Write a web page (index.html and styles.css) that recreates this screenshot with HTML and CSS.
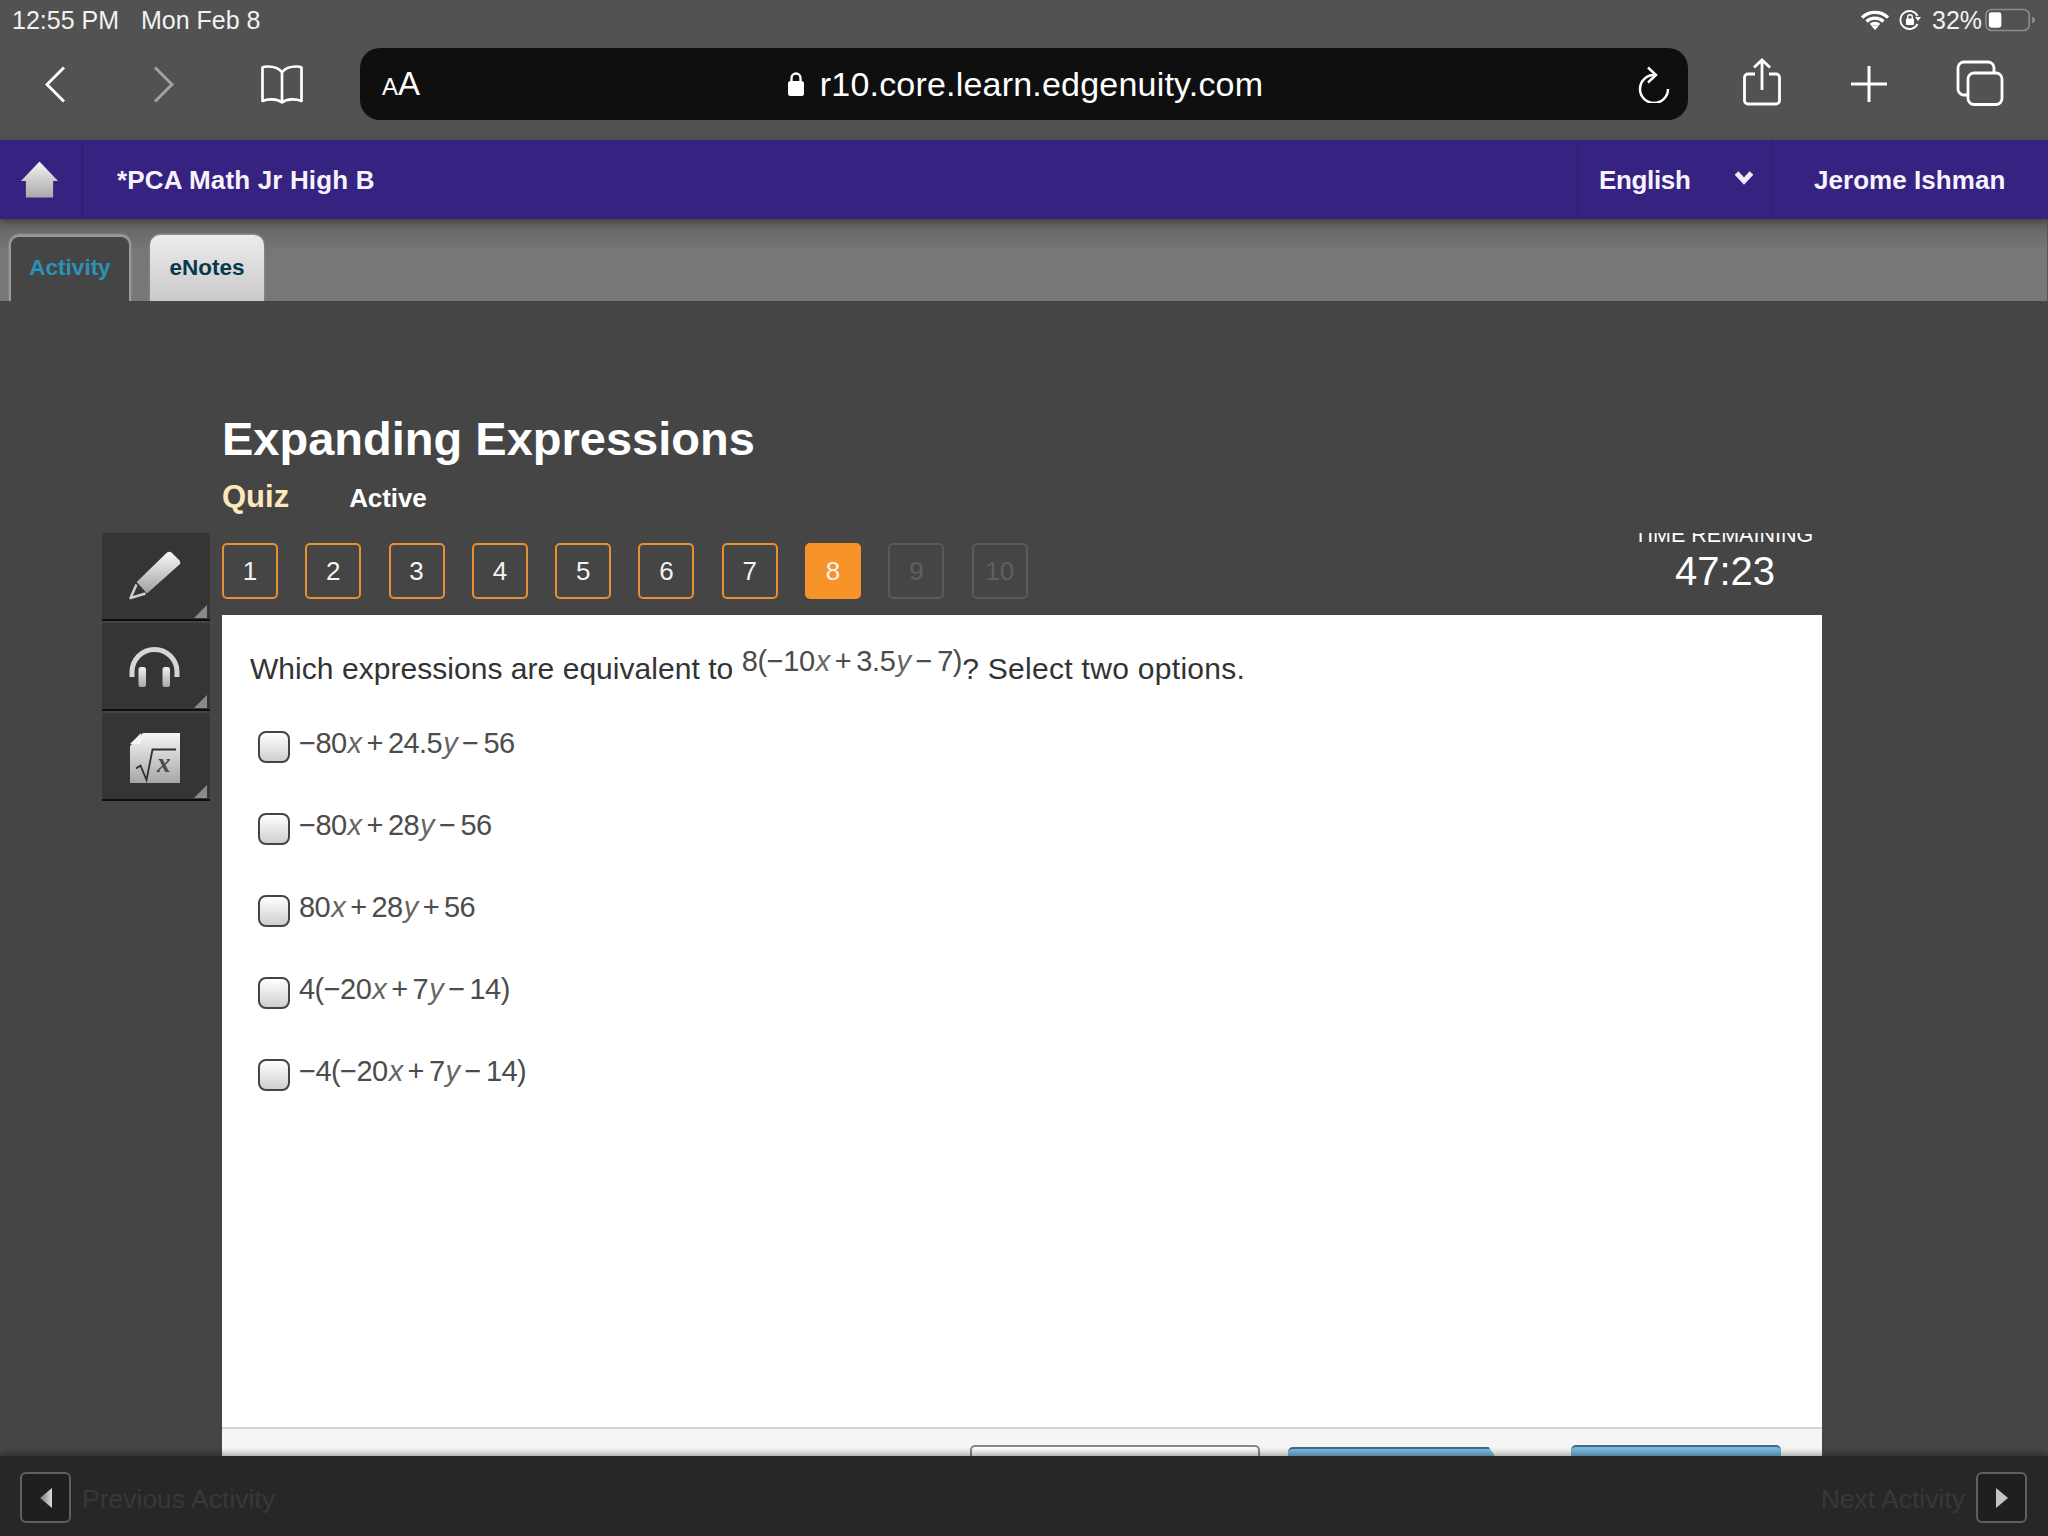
FILE: index.html
```html
<!DOCTYPE html>
<html lang="en">
<head>
<meta charset="utf-8">
<title>Expanding Expressions</title>
<link rel="stylesheet" href="styles.css">
</head>
<body>
<div class="page">
  <div class="chrome">
    <div class="statusbar">
      <div class="status-left"><span>12:55 PM</span><span>Mon Feb 8</span></div>
      <div class="status-right">
        <svg class="ic-wifi" viewBox="0 0 28 20"><path d="M1 7.500a19 19 0 0 1 26 0M5.500 11.500a12.500 12.500 0 0 1 17 0M9.800 15a6.500 6.500 0 0 1 8.400 0" fill="none" stroke="#fff" stroke-width="3.300"/><path d="M14 20l-3.200-3.400a4.500 4.500 0 0 1 6.400 0z" fill="#fff"/></svg>
        <svg class="ic-rot" viewBox="0 0 22 22"><path d="M18.500 15a9 9 0 1 1 0-8" fill="none" stroke="#fff" stroke-width="1.800"/><path d="M16 8h6l-3 4z" fill="#fff"/><rect x="7" y="9.500" width="8" height="6.500" rx="1" fill="#fff"/><path d="M8.700 10V8a2.300 2.300 0 0 1 4.600 0v2" fill="none" stroke="#fff" stroke-width="1.400"/></svg>
        <span class="batt-text">32%</span>
        <svg class="ic-batt" viewBox="0 0 52 24"><rect x="1" y="1" width="45" height="22" rx="6" fill="none" stroke="#8d8d8d" stroke-width="1.600"/><rect x="4" y="4" width="13" height="16" rx="2.500" fill="#fff"/><path d="M49 8.500c2 .5 3 2 3 3.500s-1 3-3 3.500z" fill="#8d8d8d"/></svg>
      </div>
    </div>
    <div class="toolbar">
      <div class="tool-left">
        <svg class="ic-back" viewBox="0 0 20 37"><path d="M19 1.500L2 18.500l17 17" fill="none" stroke="#fff" stroke-width="3"/></svg>
        <svg class="ic-fwd" viewBox="0 0 21 37"><path d="M2 1.500l17 17-17 17" fill="none" stroke="#a2a2a2" stroke-width="3"/></svg>
        <svg class="ic-book" viewBox="0 0 44 38"><path d="M22 7c-3-4-8-5.500-14-5.500-2.500 0-4 .5-5 1V35c5-2 14-2.500 19 1.500 5-4 14-3.500 19-1.500V2.500c-1-.5-2.500-1-5-1-6 0-11 1.500-14 5.500zM22 7v29" fill="none" stroke="#fff" stroke-width="2.600" stroke-linejoin="round"/></svg>
      </div>
      <div class="urlbar">
        <span class="aa"><span class="aa-small">A</span>A</span>
        <div class="url">
          <svg class="ic-lock" viewBox="0 0 18 26"><rect x="1" y="10" width="16" height="15" rx="2.500" fill="#fff"/><path d="M4.500 11V7a4.500 4.500 0 0 1 9 0v4" fill="none" stroke="#fff" stroke-width="2.300"/></svg>
          <span>r10.core.learn.edgenuity.com</span>
        </div>
        <svg class="ic-reload" viewBox="0 0 32 37"><path d="M16 9a14 14 0 1 0 14 14" fill="none" stroke="#fff" stroke-width="2.500"/><path d="M10 1.500L18 9l-8 7.500" fill="none" stroke="#fff" stroke-width="2.500"/></svg>
      </div>
      <div class="tool-right">
        <svg class="ic-share" viewBox="0 0 38 48"><path d="M12 16H5a3.500 3.500 0 0 0-3.500 3.500v23A3.500 3.500 0 0 0 5 46h28a3.500 3.500 0 0 0 3.500-3.500v-23A3.500 3.500 0 0 0 33 16h-7M19 32V2M11 9.500L19 2l8 7.500" fill="none" stroke="#fff" stroke-width="2.800"/></svg>
        <svg class="ic-plus" viewBox="0 0 36 36"><path d="M18 0v36M0 18h36" stroke="#fff" stroke-width="3"/></svg>
        <svg class="ic-tabs" viewBox="0 0 48 46"><rect x="12" y="13" width="34" height="31.500" rx="6" fill="none" stroke="#fff" stroke-width="2.800"/><path d="M12 35H8a6 6 0 0 1-6-6V8a6 6 0 0 1 6-6h24a6 6 0 0 1 6 6v5" fill="none" stroke="#fff" stroke-width="2.800"/></svg>
      </div>
    </div>
  </div>

  <header class="course">
    <div class="home">
      <svg class="ic-home" viewBox="0 0 38 38"><defs><linearGradient id="hg" x1="0" y1="0" x2="0" y2="1"><stop offset="0" stop-color="#f4f4f4"/><stop offset="1" stop-color="#a9a9a9"/></linearGradient></defs><path d="M19 0l19 20h-5v17H5V20H0z" fill="url(#hg)"/></svg>
    </div>
    <div class="course-name">*PCA Math Jr High B</div>
    <div class="lang"><span class="lang-name">English</span>
      <svg class="ic-chev" viewBox="0 0 20 15"><path d="M2.500 3l7.500 8 7.500-8" fill="none" stroke="#efeaf8" stroke-width="5"/></svg>
    </div>
    <div class="user">Jerome Ishman</div>
  </header>

  <nav class="tabs">
    <div class="tab tab-active">Activity</div>
    <div class="tab tab-plain">eNotes</div>
  </nav>

  <main class="stage">
    <aside class="tools">
      <div class="tool">
        <svg class="ic-tool" viewBox="0 0 60 60"><defs><linearGradient id="tg" x1="0" y1="0" x2="0" y2="1"><stop offset="0" stop-color="#fafafa"/><stop offset="1" stop-color="#a0a0a0"/></linearGradient></defs><path d="M41 6.500q2.500-1.500 4.500 0l8 8q1.500 2 0 4L21 47.500 10.700 36z" fill="url(#tg)"/><path d="M10.500 38.500L4.500 52l15-4.500" fill="none" stroke="#cfcfcf" stroke-width="2.500" stroke-linejoin="round"/></svg>
      </div>
      <div class="tool">
        <svg class="ic-tool" viewBox="0 0 60 60"><defs><linearGradient id="tp" x1="0" y1="0" x2="0" y2="1"><stop offset="0" stop-color="#f0f0f0"/><stop offset="1" stop-color="#a8a8a8"/></linearGradient></defs><path d="M6 41v-5a22.500 22.500 0 0 1 45 0v5" fill="none" stroke="#d6d6d6" stroke-width="5"/><rect x="12.500" y="31" width="7.500" height="20" rx="2.500" fill="url(#tp)"/><rect x="36.500" y="31" width="7.500" height="20" rx="2.500" fill="url(#tp)"/></svg>
      </div>
      <div class="tool">
        <svg class="ic-tool" viewBox="0 0 60 60"><defs><linearGradient id="td" x1="0" y1="0" x2="0" y2="1"><stop offset="0" stop-color="#f6f6f6"/><stop offset="1" stop-color="#a6a6a6"/></linearGradient></defs><path d="M17 7h37v50H4V20z" fill="url(#td)"/><path d="M15 7v11H4z" fill="#f4f4f4"/><path d="M10 42.500l4.500-3 6 14.500 6-30.500h23.500" fill="none" stroke="#2e2e2e" stroke-width="1.800"/><text class="doc-x" x="31" y="46">x</text></svg>
      </div>
    </aside>

    <section class="content">
      <h1 class="title">Expanding Expressions</h1>
      <div class="subline"><span class="kind">Quiz</span><span class="state">Active</span></div>
      <div class="qnav">
        <div class="nums">
          <span class="num">1</span><span class="num">2</span><span class="num">3</span><span class="num">4</span><span class="num">5</span><span class="num">6</span><span class="num">7</span><span class="num num-on">8</span><span class="num num-off">9</span><span class="num num-off">10</span>
        </div>
        <div class="timer"><div class="timer-label">TIME REMAINING</div><div class="timer-val">47:23</div></div>
      </div>
      <div class="panel">
        <div class="panel-body">
          <p class="question">Which expressions are equivalent to <span class="math math-q">8(−10<i>x</i><b>+</b>3.5<i>y</i><b>−</b>7)</span><span class="q-end">? Select two options.</span></p>
          <ul class="options">
            <li class="option"><span class="check"></span><span class="math">−80<i>x</i><b>+</b>24.5<i>y</i><b>−</b>56</span></li>
            <li class="option"><span class="check"></span><span class="math">−80<i>x</i><b>+</b>28<i>y</i><b>−</b>56</span></li>
            <li class="option"><span class="check"></span><span class="math">80<i>x</i><b>+</b>28<i>y</i><b>+</b>56</span></li>
            <li class="option"><span class="check"></span><span class="math">4(−20<i>x</i><b>+</b>7<i>y</i><b>−</b>14)</span></li>
            <li class="option"><span class="check"></span><span class="math">−4(−20<i>x</i><b>+</b>7<i>y</i><b>−</b>14)</span></li>
          </ul>
        </div>
        <div class="panel-foot">
          <span class="btn btn-white"></span>
          <span class="btn btn-blue btn-slant"></span>
          <span class="btn btn-blue btn-last"></span>
        </div>
      </div>
    </section>
  </main>

  <footer class="bottom">
    <div class="pager">
      <span class="pager-btn"><svg class="ic-tri" viewBox="0 0 12 20"><defs><linearGradient id="pg" x1="0" y1="0" x2="1" y2="0"><stop offset="0" stop-color="#777"/><stop offset="1" stop-color="#ddd"/></linearGradient></defs><path d="M12 0v20L0 10z" fill="url(#pg)"/></svg></span>
      <span class="pager-text">Previous Activity</span>
    </div>
    <div class="pager">
      <span class="pager-text">Next Activity</span>
      <span class="pager-btn"><svg class="ic-tri" viewBox="0 0 12 20"><path d="M0 0v20l12-10z" fill="#c4c4c4"/></svg></span>
    </div>
  </footer>
</div>
</body>
</html>
```

FILE: styles.css
```css
* { box-sizing: border-box; }
html, body { margin: 0; padding: 0; }
body { background: #454545; font-family: "Liberation Sans", Arial, sans-serif; color: #fff; }
.page { width: 2048px; height: 1536px; display: flex; flex-direction: column; overflow: hidden; }

.chrome { height: 140px; background: #525252; flex: none; }
.statusbar { height: 48px; display: flex; justify-content: space-between; padding: 8px 13px 0 12px; }
.status-left { display: flex; gap: 22px; font-size: 25px; line-height: 24px; color: #f2f2f2; }
.status-right { display: flex; align-items: flex-start; height: 26px; }
.ic-wifi { width: 28px; height: 20px; margin: 2px 10px 0 0; }
.ic-rot { width: 22px; height: 22px; margin: 1px 11px 0 0; }
.batt-text { font-size: 25px; line-height: 24px; width: 53px; color: #f2f2f2; }
.ic-batt { width: 50px; height: 24px; }

.toolbar { height: 92px; display: flex; align-items: flex-start; }
.tool-left { width: 360px; height: 72px; display: flex; align-items: center; padding-left: 45px; }
.ic-back { width: 20px; height: 37px; }
.ic-fwd { width: 21px; height: 37px; margin-left: 88px; }
.ic-book { width: 46px; height: 39px; margin-left: 85px; }
.urlbar { width: 1328px; height: 72px; border-radius: 20px; background: #0f0f0f; display: flex; align-items: center; padding: 0 18px 0 22px; }
.aa { font-size: 33px; width: 40px; line-height: 36px; padding-top: 2px; }
.aa-small { font-size: 24px; }
.url { flex: 1; display: flex; align-items: center; justify-content: center; gap: 15px; font-size: 34px; letter-spacing: .2px; padding-right: 10px; }
.ic-lock { width: 18px; height: 26px; }
.ic-reload { width: 32px; height: 37px; }
.tool-right { flex: 1; height: 72px; display: flex; align-items: center; padding-left: 55px; }
.ic-share { width: 38px; height: 48px; margin-top: -5px; }
.ic-plus { width: 36px; height: 36px; margin-left: 70px; }
.ic-tabs { width: 48px; height: 46px; margin: -2px 0 0 69px; }

.course { height: 79px; flex: none; background: #352281; display: flex; align-items: center; font-size: 26px; font-weight: bold; color: #f6f3fb; position: relative; z-index: 2; box-shadow: 0 3px 7px rgba(0,0,0,.35); }
.home { width: 83px; height: 79px; border-right: 1px solid #2c1c70; display: flex; align-items: center; padding-left: 21px; }
.ic-home { width: 37px; height: 38px; }
.course-name { flex: 1; padding: 2px 0 0 34px; letter-spacing: .15px; }
.lang { width: 196px; height: 79px; border-left: 1px solid #2c1c70; border-right: 1px solid #2c1c70; display: flex; align-items: center; justify-content: space-between; padding: 0 18px 0 21px; }
.lang-name { letter-spacing: -.35px; padding-top: 2px; }
.ic-chev { width: 20px; height: 15px; margin-top: -4px; }
.user { width: 275px; height: 79px; line-height: 81px; padding-left: 41px; letter-spacing: .05px; }

.tabs { height: 82px; flex: none; background: linear-gradient(#626262, #777 40%); border-right: 1px solid #555; display: flex; align-items: flex-end; padding-left: 9px; gap: 19px; font-size: 22.500px; font-weight: bold; }
.tab { height: 66px; line-height: 62px; text-align: center; border-radius: 10px 10px 0 0; box-shadow: 0 -1px 2px rgba(255,255,255,.35); }
.tab-active { width: 122px; background: #454545; color: #2a93b7; border: 2px solid #9a9a9a; border-bottom: 0; }
.tab-plain { width: 114px; line-height: 66px; background: linear-gradient(#ececec, #c9c9c9); color: #07394c; }

.stage { flex: 1; min-height: 0; display: flex; padding-left: 102px; overflow: hidden; }
.tools { width: 108px; margin: 232px 12px 0 0; flex: none; }
.tool { height: 88px; margin-bottom: 2px; background: #353535; border-bottom: 2px solid #0e0e0e; display: flex; align-items: center; justify-content: center; position: relative; }
.tool::after { content: ""; position: absolute; right: 3px; bottom: 1px; border-style: solid; border-width: 0 0 13px 13px; border-color: transparent transparent #8a8a8a transparent; }
.ic-tool { width: 60px; height: 60px; }
.doc-x { font-family: "Liberation Serif", serif; font-size: 27px; font-weight: bold; font-style: italic; fill: #4a4a4a; }

.content { width: 1600px; display: flex; flex-direction: column; padding-top: 111px; }
.title { margin: 0; font-size: 47px; line-height: 54px; font-weight: bold; }
.subline { margin-top: 13px; height: 36px; display: flex; align-items: baseline; gap: 60px; }
.kind { font-size: 31px; line-height: 36px; font-weight: bold; color: #fde9b8; }
.state { font-size: 26px; font-weight: bold; letter-spacing: -.1px; }
.qnav { margin-top: 18px; height: 82px; flex: none; display: flex; overflow: hidden; }
.nums { display: flex; gap: 27.300px; padding-top: 10px; }
.num { width: 56px; height: 56px; border: 2px solid #e68f33; border-radius: 5px; text-align: center; font-size: 26px; line-height: 52px; color: #f4f4f4; }
.num-on { background: #f79329; border-color: #f79329; }
.num-off { border-color: #5a5a5a; color: #5f5f5f; }
.timer { margin: -10px 9px 0 auto; width: 176px; text-align: center; }
.timer-label { font-size: 21.500px; line-height: 24px; white-space: nowrap; margin: 0 3px 0 -3px; }
.timer-val { font-size: 40px; line-height: 44px; margin-top: 2px; }

.panel { flex: 1; min-height: 0; background: #fff; display: flex; flex-direction: column; color: #333; }
.panel-body { flex: 1; padding: 36px 0 0 28px; }
.question { margin: 0; font-size: 30px; line-height: 36px; white-space: nowrap; color: #333; letter-spacing: .04px; }
.q-end { letter-spacing: .3px; }
.options { list-style: none; margin: 44px 0 0; padding: 0 0 0 8px; display: flex; flex-direction: column; gap: 50px; }
.option { display: flex; gap: 9px; height: 32px; }
.check { width: 32px; height: 32px; border: 2px solid #444; border-radius: 8px; background: linear-gradient(#fff, #cfcfcf); flex: none; }
.math { font-size: 29px; line-height: 24px; color: #4c4c4c; letter-spacing: -.55px; white-space: nowrap; }
.math i { margin-left: 1px; color: #666; }
.math b { font-weight: normal; margin: 0 5px; }
.math-q { position: relative; top: -8px; letter-spacing: -.4px; }
.panel-foot { height: 29px; flex: none; background: #f5f5f5; border-top: 2px solid #d2d2d2; display: flex; padding: 16px 41px 0 748px; overflow: hidden; }
.btn { display: block; height: 40px; }
.btn-white { width: 290px; margin-right: 28px; border: 2px solid #888; border-radius: 5px 5px 0 0; background: linear-gradient(#fff, #ddd); }
.btn-blue { border-top: 2px solid #3c6d8e; background: linear-gradient(#7dbbe0, #5c9dc8); }
.btn-slant { width: 209px; margin: 2px 74px 0 0; border-radius: 5px 0 0 0; clip-path: polygon(0 0, 96% 0, 100% 12px, 100% 100%, 0 100%); }
.btn-last { width: 210px; border-radius: 5px 5px 0 0; }

.bottom { height: 80px; flex: none; background: #272727; display: flex; justify-content: space-between; padding: 16px 21px 0 20px; position: relative; box-shadow: 0 -3px 6px rgba(0,0,0,.3); }
.pager { display: flex; gap: 11px; }
.pager-btn { width: 51px; height: 51px; border: 2px solid #5f5f5f; border-radius: 6px; background: #1f1f1f; display: flex; align-items: center; justify-content: center; }
.ic-tri { width: 12px; height: 20px; }
.pager-text { font-size: 26.500px; line-height: 54px; color: #383838; }
```
